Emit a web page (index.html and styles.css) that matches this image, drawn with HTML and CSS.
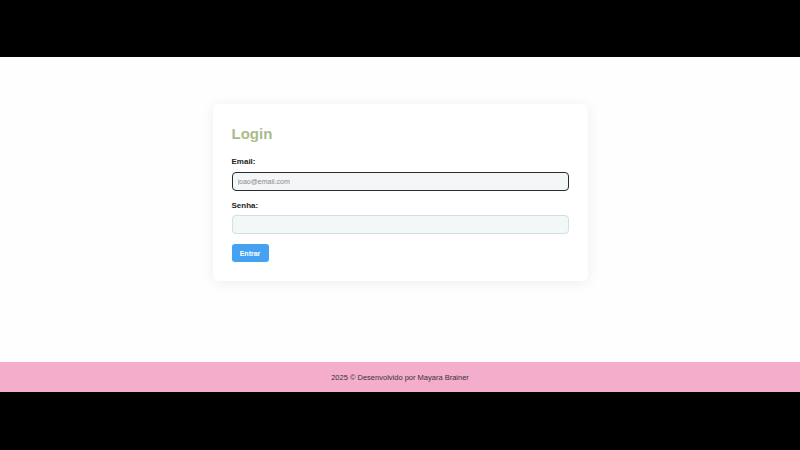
FILE: index.html
```html
<!DOCTYPE html>
<html lang="pt-BR">
<head>
<meta charset="utf-8">
<title>Login</title>
<link rel="stylesheet" href="styles.css">
</head>
<body>
<div class="frame-bar"></div>
<main class="main">
  <form class="card">
    <h2 class="title">Login</h2>
    <label class="label" for="email">Email:</label>
    <input class="field field-focus" id="email" type="text" value="joao@email.com">
    <label class="label label-2" for="senha">Senha:</label>
    <input class="field" id="senha" type="password">
    <button class="btn" type="button">Entrar</button>
  </form>
</main>
<footer class="footer">2025 © Desenvolvido por Mayara Brainer</footer>
<div class="frame-bar frame-bottom"></div>
</body>
</html>
```
FILE: styles.css
```css
html, body { margin: 0; padding: 0; }
body {
  background: #000;
  font-family: "Liberation Sans", Arial, sans-serif;
  width: 800px;
  height: 450px;
  overflow: hidden;
}
.frame-bar { height: 57px; background: #000; }
.frame-bottom { height: 58px; }
.main {
  height: 305px;
  background: #fefefe;
  padding-top: 47px;
  box-sizing: border-box;
}
.card {
  width: 375px;
  box-sizing: border-box;
  margin: 0 auto;
  padding: 21px 19px 19px;
  background: #fff;
  border-radius: 6px;
  box-shadow: 0 2px 14px rgba(0, 0, 0, 0.07);
  display: flex;
  flex-direction: column;
  align-items: flex-start;
}
.title {
  margin: 0 0 15px;
  font-size: 15px;
  line-height: 17px;
  color: #a9bb8b;
  font-weight: bold;
}
.label {
  font-size: 8px;
  line-height: 10px;
  font-weight: bold;
  color: #222;
  margin-bottom: 5px;
}
.label-2 { margin-top: 10px; margin-bottom: 4px; }
.field {
  width: 100%;
  height: 19px;
  box-sizing: border-box;
  border: 1px solid #cfe1e6;
  border-radius: 4px;
  background: #f3f7f8;
  padding: 0 5px;
  font-family: "Liberation Sans", Arial, sans-serif;
  font-size: 7px;
  color: #888;
  outline: none;
}
.field-focus {
  border: 1.5px solid #2a2a2a;
}
.btn {
  margin-top: 10px;
  width: 37px;
  height: 18px;
  border: none;
  border-radius: 3px;
  background: #45a2f2;
  color: #fff;
  font-family: "Liberation Sans", Arial, sans-serif;
  font-size: 7px;
  font-weight: bold;
  padding: 0;
}
.footer {
  height: 30px;
  box-sizing: border-box;
  padding-top: 1px;
  background: #f4adcb;
  color: #333;
  font-size: 7.5px;
  line-height: 29px;
  text-align: center;
}
```
